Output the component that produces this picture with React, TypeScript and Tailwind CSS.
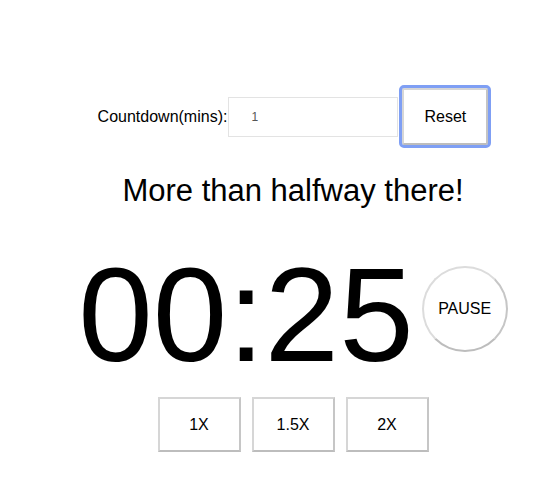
import { useState } from 'react'

const speeds = ['1X', '1.5X', '2X']

export default function App() {
  const [mins, setMins] = useState('1')
  return (
    <div className="min-h-screen bg-white text-black pl-[44px] pt-[88px] font-['Liberation_Sans',Arial,sans-serif]">
      <div className="flex flex-col items-center">
        <div className="flex items-center">
          <label className="text-[16px] mr-[1px]">Countdown(mins):</label>
          <input
            value={mins}
            onChange={(e) => setMins(e.target.value)}
            className="w-[170px] h-[40px] border border-[#e3e3e3] pl-[22px] text-[12px] text-[#555] outline-none font-['Liberation_Sans',Arial,sans-serif]"
          />
          <button className="ml-[4px] w-[86px] h-[57px] bg-white border-2 border-[#d6d6d6] border-b-[#bdbdbd] border-r-[#c4c4c4] text-[16px] outline-[3px] outline-solid outline-[#7f9ff4] outline-offset-0 rounded-[2px]">
            Reset
          </button>
        </div>
        <div className="mt-[28px] text-[31px] leading-[36px]">More than halfway there!</div>
        <div className="mt-[39px] flex items-center">
          <div className="text-[134px] leading-[134px]">00:25</div>
          <button className="ml-[8px] mb-[12px] w-[86px] h-[86px] rounded-full bg-white border-2 border-[#dcdcdc] border-b-[#bdbdbd] border-r-[#c6c6c6] text-[16px]">
            PAUSE
          </button>
        </div>
        <div className="mt-[15px] flex gap-[11px]">
          {speeds.map((s) => (
            <button
              key={s}
              className="w-[83px] h-[55px] bg-white border-2 border-[#d6d6d6] border-b-[#bdbdbd] border-r-[#c6c6c6] text-[16px]"
            >
              {s}
            </button>
          ))}
        </div>
      </div>
    </div>
  )
}
